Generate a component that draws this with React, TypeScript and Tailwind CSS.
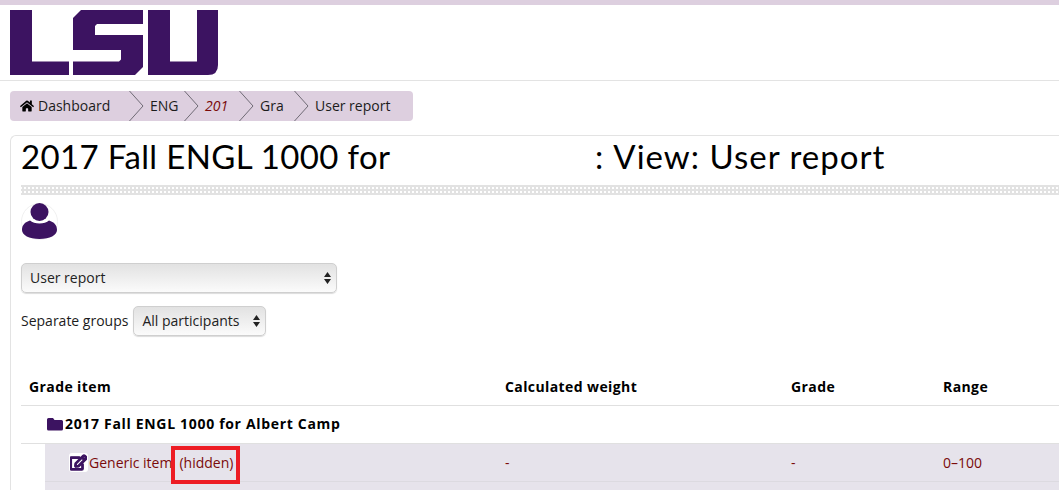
import { FaHome, FaRegEdit } from 'react-icons/fa';

// Grade report page, LSU Moodle theme.
const CRUMBS = ['ENG', '201', 'Gra'];

function Logo() {
  return (
    <svg width="208" height="65" viewBox="10 10 208 65" className="block" aria-label="LSU">
      <path
        fill="#3c1361"
        d="M10 10h22v51.500h37V75H10zM81 10H143V24H97L95 26V35H143V67L135 75H73V61.500H119L121 59.500V50H73V18zM148 10h22v51.500h27V10h21v55q0 10-10 10h-60z"
      />
    </svg>
  );
}

function Chevron() {
  return (
    <svg width="15" height="30" viewBox="0 0 15 30" className="shrink-0">
      <path d="M0.500 0L14 15L0.500 30" fill="none" stroke="#6f6a75" strokeWidth="1" />
    </svg>
  );
}

function SelectArrows() {
  return (
    <svg width="7" height="12" viewBox="0 0 7 12" className="shrink-0">
      <path d="M3.500 0L7 5H0zM0 7h7l-3.500 5z" fill="#222" />
    </svg>
  );
}

function Breadcrumb() {
  return (
    <nav className="ml-[10px] mt-[10px] flex h-[30px] w-[403px] items-center rounded-[4px] bg-[#ddcfdf] pl-[10px] text-[14px] leading-[28px] text-[#1c1c1c]">
      <div className="flex w-[109px] items-center">
        <FaHome className="h-[14px] w-[14px] shrink-0 text-black" />
        <span className="ml-[4px]">Dashboard</span>
      </div>
      <Chevron />
      {CRUMBS.map((crumb) => (
        <div key={crumb} className="flex items-center">
          <span
            className={
              crumb === '201'
                ? 'w-[40px] pl-[6px] italic text-[#7a0a0a]'
                : 'w-[40px] pl-[6px]'
            }
          >
            {crumb}
          </span>
          <Chevron />
        </div>
      ))}
      <span className="pl-[6px]">User report</span>
    </nav>
  );
}

function FakeSelect({ label, className }: { label: string; className: string }) {
  return (
    <div
      className={`flex h-[30px] items-center justify-between rounded-[5px] border border-[#cfcfcf] bg-gradient-to-b from-[#e2e2e2] to-[#fbfbfb] pl-[8px] pr-[5px] text-[14px] leading-[26px] text-[#222] shadow-[0_1px_1px_rgba(0,0,0,0.14)] ${className}`}
    >
      <span>{label}</span>
      <SelectArrows />
    </div>
  );
}

export default function App() {
  return (
    <div className="h-[490px] w-[1059px] overflow-hidden bg-white font-['Open_Sans',sans-serif]">
      <div className="h-[5px] bg-[#ddcfdf]" />
      <header className="h-[76px] border-b border-[#e3e3e3] pl-[10px] pt-[5px]">
        <Logo />
      </header>
      <Breadcrumb />

      <main className="ml-[10px] mt-[14px] rounded-tl-[6px] border-l border-t border-[#e3e3e3] pl-[10px]">
        <h1 className="flex h-[49px] items-start pt-[2px] font-['Lato',sans-serif] text-[33px] leading-[36px] text-black">
          <span className="tracking-[0.35px]">2017 Fall ENGL 1000 for</span>
          <span className="w-[213px] shrink-0 text-right">:</span>
          <span className="ml-[10px] tracking-[1px]">View: User report</span>
        </h1>
        <div className="h-[10px] bg-[radial-gradient(#e2e2e2_60%,transparent_60%)] bg-[length:4px_4px] bg-[position:0_-1px]" />

        <svg width="37" height="37" viewBox="0 0 37 37" className="mt-[8px] block">
          <circle cx="18.500" cy="18.500" r="18" fill="#fff" stroke="#f0f0f0" />
          <circle cx="18.500" cy="9" r="9" fill="#3c1361" />
          <path
            d="M1 27C1 22 4 19 9 17.500C13 21.500 24 21.500 28 17.500C33 19 36 22 36 27C36 32 29 36 18.500 36C8 36 1 32 1 27Z"
            fill="#3c1361"
          />
        </svg>

        <FakeSelect label="User report" className="mt-[23px] w-[316px]" />

        <div className="mt-[13px] flex items-center text-[14px] leading-[26px] text-[#1c1c1c]">
          <span>Separate groups</span>
          <FakeSelect label="All participants" className="ml-[5px] w-[133px]" />
        </div>

        <table className="mt-[36px] w-[1038px] table-fixed border-collapse text-[14px] leading-[16px] tracking-[0.4px]">
          <thead>
            <tr className="h-[33px] border-b border-[#e0e0e0] text-left text-black">
              <th className="w-[484px] pb-[3px] pl-[8px] font-bold">Grade item</th>
              <th className="w-[286px] pb-[3px] font-bold">Calculated weight</th>
              <th className="w-[152px] pb-[3px] font-bold">Grade</th>
              <th className="pb-[3px] font-bold">Range</th>
            </tr>
          </thead>
        </table>
        <div className="flex h-[38px] items-center border-b border-[#e0e0e0] pb-[1px] pl-[26px] text-[14px] font-bold text-black">
          <svg width="16" height="14" viewBox="0 0 16 14" className="shrink-0">
            <path
              d="M1.500 1h4.500l1.500 2h7q1.500 0 1.500 1.500V12q0 1.500-1.500 1.500h-13Q0 13.500 0 12V2.500Q0 1 1.500 1z"
              fill="#3c1361"
            />
          </svg>
          <span className="ml-[2px] tracking-[0.68px]">2017 Fall ENGL 1000 for Albert Camp</span>
        </div>
        <div className="ml-[24px] flex h-[38px] items-center border-b border-[#dcdae0] bg-[#e6e3eb] text-[14px] leading-[19px] text-[#7a0a0a]">
          <div className="flex w-[460px] items-center pl-[24px]">
            <span className="flex h-[19px] w-[19px] items-center justify-center rounded-[3px] bg-white">
              <FaRegEdit className="h-[17px] w-[17px] text-[#3c1361]" stroke="currentColor" strokeWidth={45} />
            </span>
            <span className="ml-[1px]">Generic item</span>
            <span className="relative ml-[7px]">
              (hidden)
              <span className="absolute -left-[8px] -top-[7px] h-[38px] w-[69px] border-[4px] border-[#ed1c24]" />
            </span>
          </div>
          <span className="w-[286px]">-</span>
          <span className="w-[152px]">-</span>
          <span>0–100</span>
        </div>
        <div className="ml-[24px] h-[20px] bg-[#e6e3eb]" />
      </main>
    </div>
  );
}
